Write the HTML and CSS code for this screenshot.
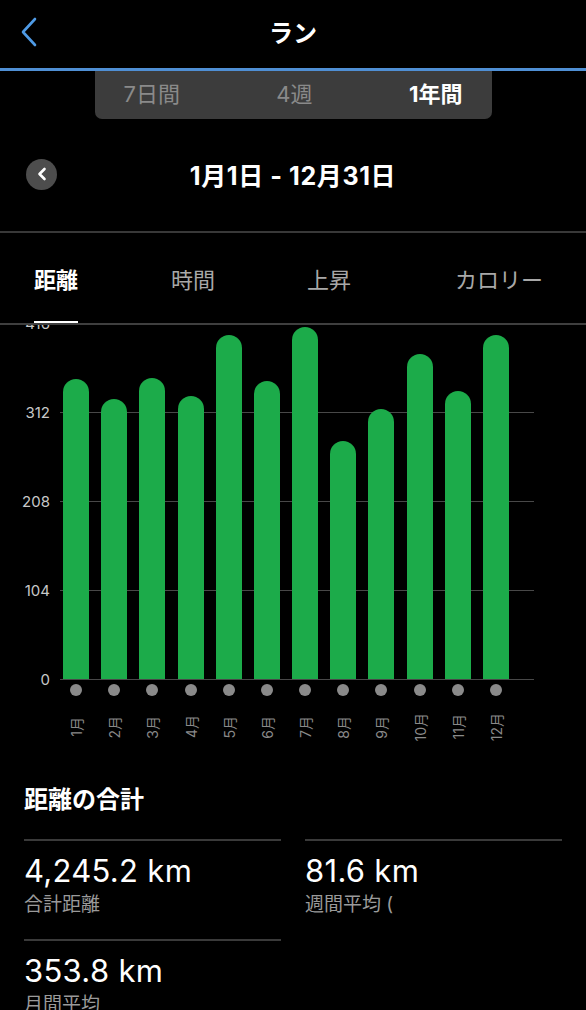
FILE: index.html
```html
<!DOCTYPE html>
<html lang="ja">
<head>
  <meta charset="UTF-8" />
  <meta name="viewport" content="width=device-width, initial-scale=1.0"/>
  <title>ラン</title>
  <link rel="stylesheet" href="styles.css">
</head>
<body>
  <div class="screen">
    <header class="nav">
      <a class="nav-back" href="#">
        <svg width="18" height="30" viewBox="0 0 18 30"><path d="M15 2 L3 15 L15 28" fill="none" stroke="#4f9be6" stroke-width="2.6" stroke-linecap="round" stroke-linejoin="round"/></svg>
      </a>
      <h1 class="nav-title">ラン</h1>
    </header>

    <div class="range">
      <div class="range-tabs">
        <span class="range-item">7日間</span>
        <span class="range-item">4週</span>
        <span class="range-item active">1年間</span>
      </div>
    </div>

    <div class="period">
      <button class="period-prev">
        <svg width="10" height="14" viewBox="0 0 10 14"><path d="M7.5 2 L2.5 7 L7.5 12" fill="none" stroke="#fff" stroke-width="2.6" stroke-linecap="round" stroke-linejoin="round"/></svg>
      </button>
      <div class="period-label">1月1日 - 12月31日</div>
    </div>

    <nav class="metric-tabs">
      <span class="metric active">距離</span>
      <span class="metric">時間</span>
      <span class="metric">上昇</span>
      <span class="metric">カロリー</span>
    </nav>

    <div class="chart">
      <div class="plot">
        <div class="grid">
          <div class="grid-row"><span class="grid-label">416</span><span class="grid-line"></span></div>
          <div class="grid-row"><span class="grid-label">312</span><span class="grid-line"></span></div>
          <div class="grid-row"><span class="grid-label">208</span><span class="grid-line"></span></div>
          <div class="grid-row"><span class="grid-label">104</span><span class="grid-line"></span></div>
          <div class="grid-row"><span class="grid-label">0</span><span class="grid-line"></span></div>
        </div>
        <div class="bars">
          <div class="bar-col"><div class="bar" style="height:300px"></div></div>
          <div class="bar-col"><div class="bar" style="height:280px"></div></div>
          <div class="bar-col"><div class="bar" style="height:301px"></div></div>
          <div class="bar-col"><div class="bar" style="height:283px"></div></div>
          <div class="bar-col"><div class="bar" style="height:344px"></div></div>
          <div class="bar-col"><div class="bar" style="height:298px"></div></div>
          <div class="bar-col"><div class="bar" style="height:352px"></div></div>
          <div class="bar-col"><div class="bar" style="height:238px"></div></div>
          <div class="bar-col"><div class="bar" style="height:270px"></div></div>
          <div class="bar-col"><div class="bar" style="height:325px"></div></div>
          <div class="bar-col"><div class="bar" style="height:288px"></div></div>
          <div class="bar-col"><div class="bar" style="height:344px"></div></div>
        </div>
      </div>
      <div class="dots">
        <span class="dot"></span><span class="dot"></span><span class="dot"></span><span class="dot"></span>
        <span class="dot"></span><span class="dot"></span><span class="dot"></span><span class="dot"></span>
        <span class="dot"></span><span class="dot"></span><span class="dot"></span><span class="dot"></span>
      </div>
      <div class="months">
        <span class="month">1月</span><span class="month">2月</span><span class="month">3月</span><span class="month">4月</span>
        <span class="month">5月</span><span class="month">6月</span><span class="month">7月</span><span class="month">8月</span>
        <span class="month">9月</span><span class="month">10月</span><span class="month">11月</span><span class="month">12月</span>
      </div>
    </div>

    <section class="summary">
      <h2 class="summary-title">距離の合計</h2>
      <div class="stats">
        <div class="stat">
          <div class="stat-value">4,245.2 km</div>
          <div class="stat-label">合計距離</div>
        </div>
        <div class="stat">
          <div class="stat-value">81.6 km</div>
          <div class="stat-label">週間平均 (</div>
        </div>
        <div class="stat">
          <div class="stat-value">353.8 km</div>
          <div class="stat-label">月間平均</div>
        </div>
      </div>
    </section>
  </div>
</body>
</html>
```

FILE: styles.css
```css
body {
  margin: 0;
  background: #000;
  color: #fff;
  font-family: Inter, "Noto Sans CJK JP", sans-serif;
}
.screen {
  width: 586px;
  height: 1010px;
  overflow: hidden;
}

/* top bar */
.nav {
  height: 71px;
  box-sizing: border-box;
  padding: 0 20px 5px;
  border-bottom: 3px solid #4f8fd4;
  display: grid;
  grid-template-columns: 1fr auto 1fr;
  align-items: center;
}
.nav-back {
  justify-self: start;
  display: flex;
}
.nav-title {
  margin: 0;
  font-size: 24px;
  font-weight: 700;
}

/* 7d / 4w / 1y */
.range {
  display: flex;
  justify-content: center;
}
.range-tabs {
  width: 397px;
  height: 48px;
  box-sizing: border-box;
  padding: 0 29px 6px;
  background: #3c3c3c;
  border-radius: 0 0 7px 7px;
  display: flex;
  justify-content: space-between;
  align-items: center;
  font-size: 22px;
  color: #8a8a8a;
}
.range-item.active {
  color: #fff;
  font-weight: 700;
}

/* date range */
.period {
  height: 114px;
  box-sizing: border-box;
  padding: 0 26px 2px;
  border-bottom: 2px solid #383838;
  display: grid;
  grid-template-columns: 1fr auto 1fr;
  align-items: center;
}
.period-prev {
  justify-self: start;
  width: 31px;
  height: 31px;
  padding: 0;
  border: none;
  border-radius: 50%;
  background: #4d4d4d;
  display: flex;
  align-items: center;
  justify-content: center;
}
.period-label {
  font-size: 25px;
  letter-spacing: 0.6px;
  font-weight: 700;
}

/* metric tabs */
.metric-tabs {
  height: 92px;
  box-sizing: border-box;
  padding-left: 34px;
  border-bottom: 2px solid #3f3f3f;
  display: grid;
  grid-template-columns: 137px 136px 148px 1fr;
}
.metric {
  justify-self: start;
  position: relative;
  padding-top: 32px;
  font-size: 22px;
  line-height: 30px;
  color: #a8a8a8;
}
.metric.active {
  color: #fff;
  font-weight: 700;
}
.metric.active::after {
  content: "";
  position: absolute;
  left: 0;
  right: 0;
  bottom: 0;
  height: 2px;
  background: #fff;
}

/* chart */
.chart {
  overflow: hidden;
}
.plot {
  position: relative;
  height: 356px;
  margin-top: -2px;
}
.grid {
  position: absolute;
  top: 0;
  left: 0;
  right: 0;
  bottom: 0;
  display: flex;
  flex-direction: column;
  justify-content: space-between;
}
.grid-row {
  height: 0;
  display: flex;
  align-items: center;
}
.grid-label {
  width: 50px;
  text-align: right;
  font-size: 15px;
  color: #c8c8c8;
}
.grid-line {
  margin-left: 10px;
  width: 474px;
  height: 1px;
  background: #484848;
}
.bars {
  position: relative;
  height: 100%;
  width: 458px;
  margin-left: 57px;
  display: flex;
  align-items: flex-end;
}
.bar-col {
  flex: 1;
  display: flex;
  justify-content: center;
}
.bar {
  width: 26px;
  background: #1cab4a;
  border-radius: 13px 13px 0 0;
}
.dots,
.months {
  width: 458px;
  margin-left: 57px;
  display: grid;
  grid-template-columns: repeat(12, 1fr);
  justify-items: center;
  align-items: center;
}
.dots {
  padding-top: 5px;
}
.dot {
  width: 12px;
  height: 12px;
  border-radius: 50%;
  background: #8a8a8a;
}
.months {
  height: 40px;
  margin-top: 11px;
}
.month {
  writing-mode: vertical-rl;
  text-orientation: sideways;
  transform: rotate(180deg);
  font-size: 14px;
  color: #8a8a8a;
}

/* totals */
.summary {
  padding: 38px 24px 0;
}
.summary-title {
  margin: 0 0 24px;
  font-size: 24px;
  line-height: 30px;
  font-weight: 700;
}
.stats {
  display: grid;
  grid-template-columns: 1fr 1fr;
  column-gap: 24px;
  row-gap: 22px;
}
.stat {
  border-top: 2px solid #3a3a3a;
  padding-top: 12px;
}
.stat-value {
  font-size: 31px;
  letter-spacing: 0.3px;
  line-height: 36px;
}
.stat-label {
  margin-top: 4px;
  font-size: 19px;
  line-height: 24px;
  color: #9a9a9a;
}
```
